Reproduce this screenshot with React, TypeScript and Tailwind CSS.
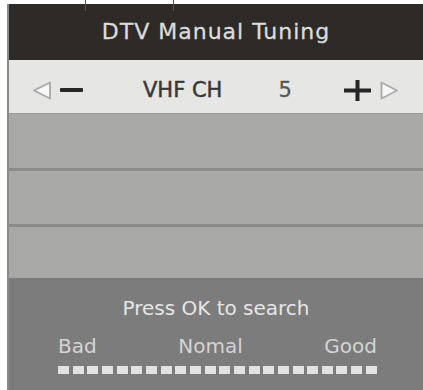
import React from "react";

const font = { fontFamily: '"DejaVu Sans", "Liberation Sans", sans-serif' };

function TriLeft() {
  return (
    <svg width="20" height="19" viewBox="0 0 20 19">
      <polygon points="2,9.5 18,1.5 18,17.5" fill="#f7f7f7" stroke="#a9a9a9" strokeWidth="1.8" strokeLinejoin="round" />
    </svg>
  );
}

function TriRight() {
  return (
    <svg width="19" height="19" viewBox="0 0 19 19">
      <polygon points="17,9.5 1.5,1.5 1.5,17.5" fill="#f7f7f7" stroke="#a9a9a9" strokeWidth="1.8" strokeLinejoin="round" />
    </svg>
  );
}

function Plus() {
  return (
    <svg width="27" height="21" viewBox="0 0 27 21">
      <rect x="0" y="8.5" width="27" height="4" fill="#252525" />
      <rect x="11.5" y="0" width="4" height="21" fill="#252525" />
    </svg>
  );
}

export default function App() {
  const squares = Array.from({ length: 22 });
  return (
    <div className="relative w-[423px] h-[390px] bg-white overflow-hidden" style={font}>
      <div className="absolute left-[85px] top-0 w-[1px] h-[11px] bg-[#555]" />
      <div className="absolute left-[173px] top-0 w-[1px] h-[11px] bg-[#555]" />
      <div className="ml-[7px] mt-[4px] h-[386px] border-l-2 border-[#8a8a88] flex flex-col">
        <div className="h-[56px] bg-[#2d2a27] flex justify-center pt-[17px]">
          <span className="text-[22px] leading-none tracking-[1px] text-[#dcdcdc] [-webkit-text-stroke:0.3px_#dcdcdc]">DTV Manual Tuning</span>
        </div>
        <div className="h-[53px] bg-[#e6e6e4] flex items-center pt-[7px] pl-[23px]">
          <TriLeft />
          <div className="ml-[8px] w-[23px] h-[4px] bg-[#262626] rounded-[1px]" />
          <span className="ml-[60px] text-[21px] leading-none text-[#383838] [-webkit-text-stroke:0.5px_#383838]">VHF CH</span>
          <span className="ml-[56px] text-[21px] leading-none text-[#555] [-webkit-text-stroke:0.3px_#555]">5</span>
          <div className="ml-[52px] flex items-center"><Plus /></div>
          <div className="ml-[9px] flex items-center"><TriRight /></div>
        </div>
        <div className="h-[55px] bg-[#a8a8a6] border-t border-[#9c9c9a]" />
        <div className="h-[3px] bg-[#8b8b89]" />
        <div className="h-[53px] bg-[#a9a9a8]" />
        <div className="h-[3px] bg-[#8b8b89]" />
        <div className="h-[51px] bg-[#a8a8a7]" />
        <div className="flex-1 bg-[#7c7c7c] flex flex-col pt-[20px]">
          <div className="flex justify-center">
            <span className="text-[20px] leading-none text-[#e6e6e6]">Press OK to search</span>
          </div>
          <div className="ml-[49px] w-[319px] mt-[18px] flex justify-between text-[20px] leading-none text-[#d4d4d4]">
            <span>Bad</span>
            <span>Nomal</span>
            <span>Good</span>
          </div>
          <div className="ml-[49px] w-[319px] mt-[10px] flex justify-between">
            {squares.map((_, i) => (
              <div key={i} className="w-[11px] h-[8px] bg-[#e2e2e2]" />
            ))}
          </div>
        </div>
      </div>
    </div>
  );
}
